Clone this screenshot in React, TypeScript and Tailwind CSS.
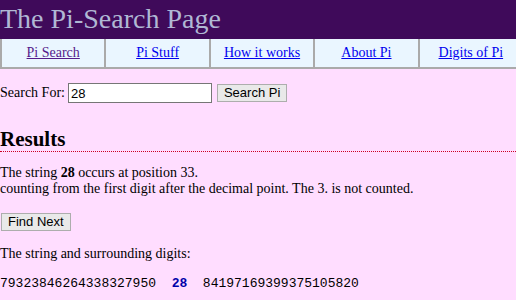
export default function App() {
  const tabs = ["Pi Search", "Pi Stuff", "How it works", "About Pi", "Digits of Pi"];
  const btnFont = { fontFamily: '"Liberation Sans", Arial, sans-serif' };
  return (
    <div className="w-[516px] h-[300px] overflow-hidden bg-[#ffddff] text-black text-[14px] leading-[16px]" style={{ fontFamily: '"Liberation Serif", "Times New Roman", serif' }}>
      <div className="h-[39px] bg-[#3f0a5a] text-[#b0b8d4] text-[28px] leading-[38px] whitespace-nowrap overflow-hidden">
        The Pi-Search Page
      </div>
      <div className="w-[516px] overflow-hidden">
        <div className="flex w-[522px] h-[30px] bg-[#eaf6ff] border-b-2 border-[#aaaaaa]">
          {tabs.map((t, i) => (
            <div key={t} className="flex-1 border-l-2 border-[#aaaaaa] flex items-center justify-center">
              <a href="#" className={"underline " + (i === 0 ? "text-[#551a8b]" : "text-[#0000ee]")}>{t}</a>
            </div>
          ))}
        </div>
      </div>
      <div className="mt-[14px] flex items-center h-[20px]">
        <span>Search For:</span>
        <input
          defaultValue="28"
          className="ml-[3px] w-[144px] h-[20px] bg-white border border-[#767676] px-[2px] text-[13px] outline-none"
          style={btnFont}
        />
        <button
          className="ml-[5px] h-[18px] px-[6px] bg-[#e9e9e9] border border-[#adadad] text-[13px] leading-[16px]"
          style={btnFont}
        >
          Search Pi
        </button>
      </div>
      <h2 className="mt-[24px] text-[21px] font-bold leading-[24px] border-b border-dotted border-[#cc0022]">Results</h2>
      <p className="mt-[13px]">
        The string <b>28</b> occurs at position 33.
        <br />
        counting from the first digit after the decimal point. The 3. is not counted.
      </p>
      <button
        className="mt-[16px] ml-[1px] h-[18px] px-[6px] bg-[#e9e9e9] border border-[#adadad] text-[13px] leading-[16px] block"
        style={btnFont}
      >
        Find Next
      </button>
      <p className="mt-[15px]">The string and surrounding digits:</p>
      <pre className="mt-[14px] text-[13px] leading-[16px]" style={{ fontFamily: '"Liberation Mono", "Courier New", monospace' }}>
        79323846264338327950  <b className="text-[#0000aa]">28</b>  84197169399375105820
      </pre>
    </div>
  );
}
